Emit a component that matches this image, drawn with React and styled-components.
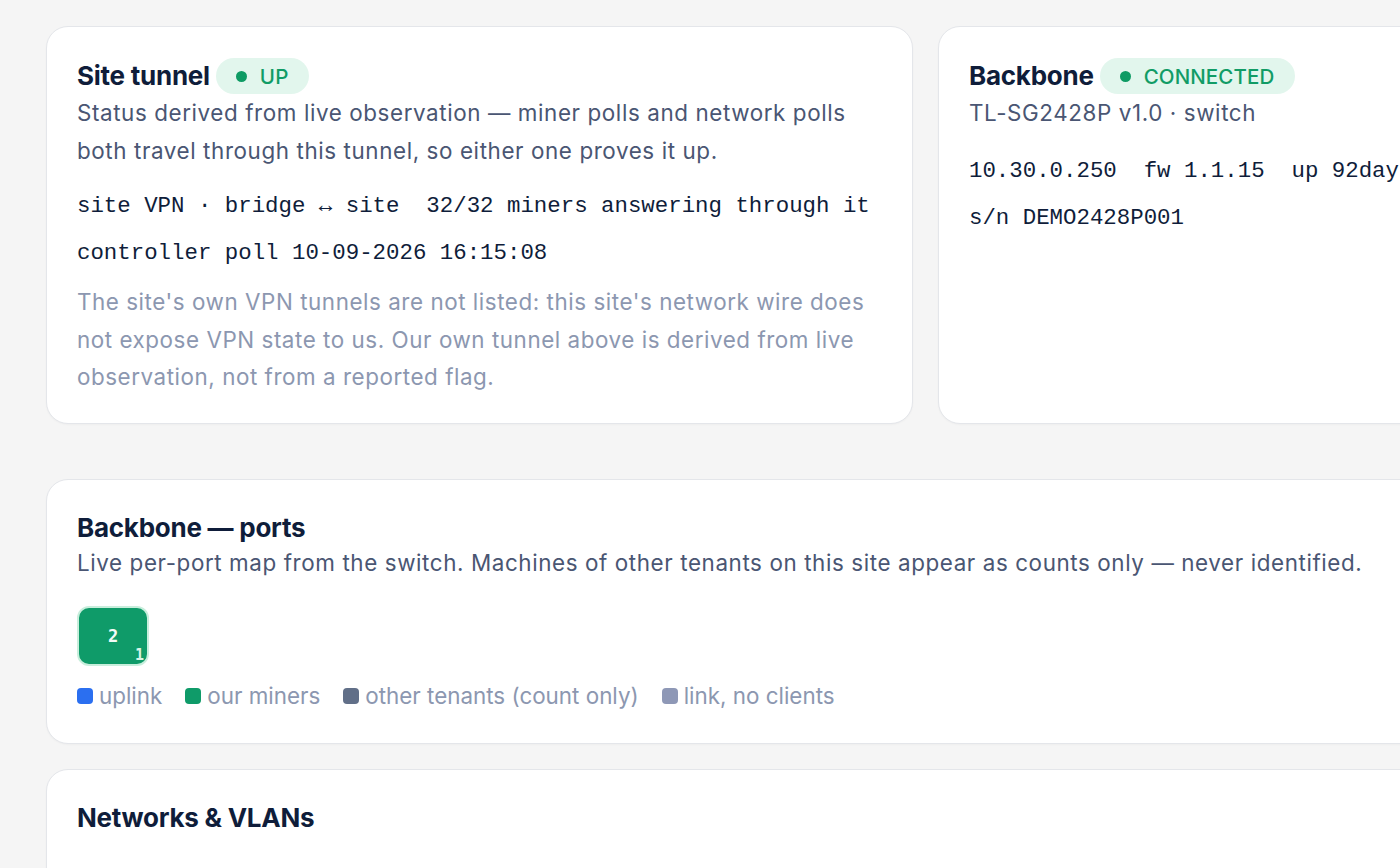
import React from 'react';
import styled, { createGlobalStyle } from 'styled-components';

const GlobalStyle = createGlobalStyle`
  html, body {
    margin: 0;
    padding: 0;
    background: #f5f5f5;
    overflow: hidden;
  }
  body {
    font-family: Inter, "Noto Sans", sans-serif;
    color: #0f1d3a;
  }
`;

const Page = styled.div`
  width: 1759px;
  padding: 26px 0 0 46px;
  display: flex;
  flex-direction: column;
`;

const TopRow = styled.div`
  display: grid;
  grid-template-columns: 1fr 1fr;
  gap: 25px;
  margin-bottom: 55px;
`;

const Stack = styled.div`
  display: flex;
  flex-direction: column;
  gap: 25px;
`;

const Card = styled.section`
  background: #fff;
  border: 1px solid #e4e6ea;
  border-radius: 22px;
  padding: ${p => (p.$tight ? '32px 30px 32px' : '31px 30px 27px')};
  box-shadow: 0 1px 2px rgba(15, 23, 42, 0.03);
`;

const TitleRow = styled.div`
  display: flex;
  align-items: center;
  gap: 6px;
  height: 36px;
`;

const Title = styled.h2`
  margin: 0;
  font-size: 26px;
  font-weight: 700;
  letter-spacing: -0.25px;
  color: #0f1d3a;
  line-height: ${p => (p.$short ? '32px' : '36px')};
`;

const Pill = styled.span`
  display: inline-flex;
  align-items: center;
  gap: 13px;
  height: 36px;
  padding: 0 21px 0 20px;
  border-radius: 18px;
  background: #e2f6ed;
  color: #119c66;
  font-size: 20.5px;
  font-weight: 500;
  letter-spacing: 0.1px;

  &::before {
    content: '';
    width: 11px;
    height: 11px;
    border-radius: 50%;
    background: #0e9b64;
  }
`;

const Sub = styled.p`
  margin: 0;
  font-size: 22.4px;
  letter-spacing: 0.6px;
  line-height: 38px;
  color: #4a5673;
  white-space: nowrap;
`;

const MonoBlock = styled.div`
  margin-top: ${p => p.$gap || 13}px;
  font-family: "Liberation Mono", "DejaVu Sans Mono", monospace;
  font-size: 22.4px;
  line-height: 46.5px;
  color: #0f1d3a;
  white-space: pre;
`;

const Note = styled.p`
  margin: 7px 0 0;
  font-size: 22.4px;
  letter-spacing: 0.55px;
  line-height: 37.5px;
  color: #8c97b0;
  white-space: nowrap;
`;

const Ports = styled.div`
  display: flex;
  gap: 10px;
  margin-top: 24px;
`;

const Port = styled.div`
  position: relative;
  width: 72px;
  height: 60px;
  box-sizing: border-box;
  border-radius: 12px;
  background: #0f9b69;
  border: 2px solid #c8eedc;
  display: flex;
  align-items: center;
  justify-content: center;
  color: #f2fbf7;
  font-family: "DejaVu Sans Mono", "Liberation Mono", monospace;
  font-weight: 700;
  font-size: 17px;
`;

const PortCount = styled.span`
  position: absolute;
  right: 3px;
  bottom: 0;
  font-size: 15px;
  color: #d7f5e7;
`;

const Legend = styled.div`
  display: flex;
  align-items: center;
  gap: 23px;
  margin-top: 15px;
  height: 30px;
`;

const LegendItem = styled.span`
  display: inline-flex;
  align-items: center;
  gap: 6px;
  font-size: 22.4px;
  color: #8c97b0;

  &::before {
    content: '';
    width: 16px;
    height: 16px;
    border-radius: 4px;
    background: ${p => p.$color};
  }
`;

const legend = [
  { label: 'uplink', color: '#2b6ff0' },
  { label: 'our miners', color: '#0f9b69' },
  { label: 'other tenants (count only)', color: '#616f88' },
  { label: 'link, no clients', color: '#8e98b6' },
];

export default function App() {
  return (
    <>
      <GlobalStyle />
      <Page>
        <TopRow>
          <Card>
            <TitleRow>
              <Title>Site tunnel</Title>
              <Pill>UP</Pill>
            </TitleRow>
            <Sub>
              Status derived from live observation — miner polls and network polls
              <br />
              both travel through this tunnel, so either one proves it up.
            </Sub>
            <MonoBlock>
              <div>site VPN · bridge ↔ site  32/32 miners answering through it</div>
              <div>controller poll 10-09-2026 16:15:08</div>
            </MonoBlock>
            <Note>
              The site's own VPN tunnels are not listed: this site's network wire does
              <br />
              not expose VPN state to us. Our own tunnel above is derived from live
              <br />
              observation, not from a reported flag.
            </Note>
          </Card>
          <Card>
            <TitleRow>
              <Title>Backbone</Title>
              <Pill>CONNECTED</Pill>
            </TitleRow>
            <Sub>TL-SG2428P v1.0 · switch</Sub>
            <MonoBlock $gap={16}>
              <div>10.30.0.250  fw 1.1.15  up 92days</div>
              <div>s/n DEMO2428P001</div>
            </MonoBlock>
          </Card>
        </TopRow>
        <Stack>
          <Card $tight>
            <Title $short>Backbone — ports</Title>
            <Sub>
              Live per-port map from the switch. Machines of other tenants on this site appear as counts only — never identified.
            </Sub>
            <Ports>
              <Port>
                2<PortCount>1</PortCount>
              </Port>
            </Ports>
            <Legend>
              {legend.map(l => (
                <LegendItem key={l.label} $color={l.color}>
                  {l.label}
                </LegendItem>
              ))}
            </Legend>
          </Card>
          <Card $tight>
            <Title $short>Networks &amp; VLANs</Title>
            <div style={{ height: 200 }} />
          </Card>
        </Stack>
      </Page>
    </>
  );
}
